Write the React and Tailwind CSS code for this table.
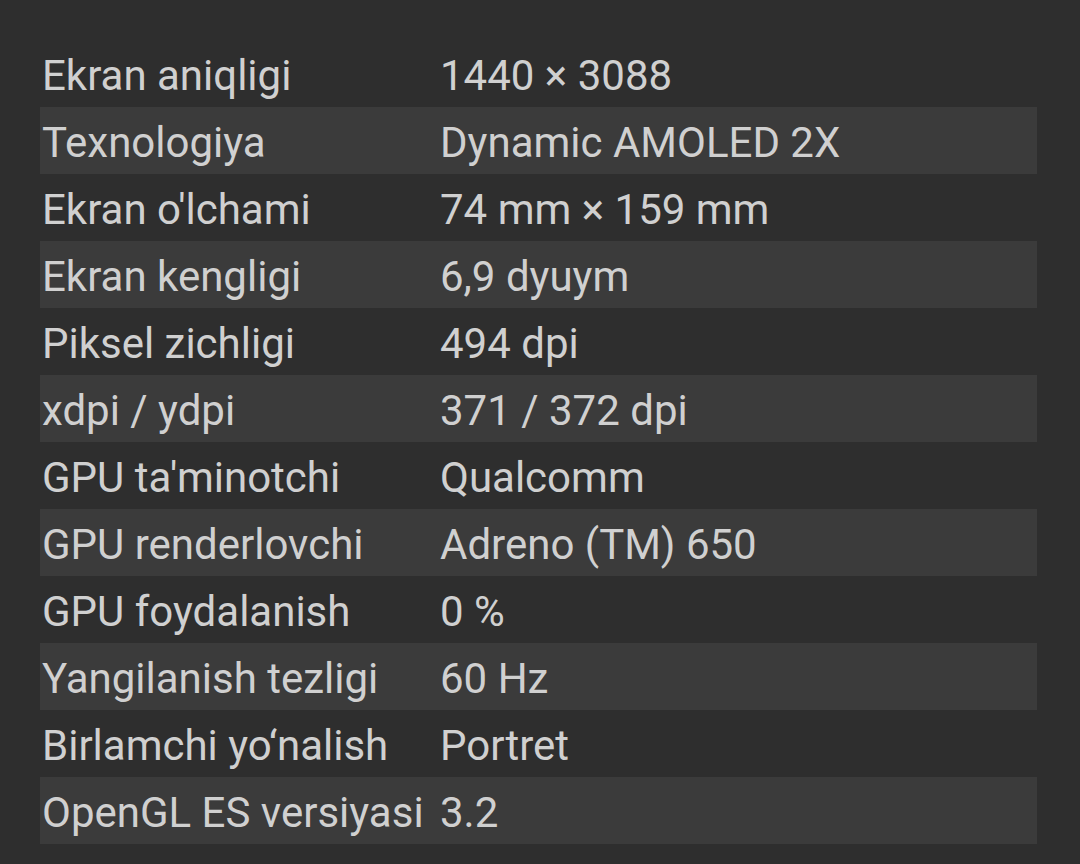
import React from "react";

const rows = [
  ["Ekran aniqligi", "1440 × 3088"],
  ["Texnologiya", "Dynamic AMOLED 2X"],
  ["Ekran o'lchami", "74 mm × 159 mm"],
  ["Ekran kengligi", "6,9 dyuym"],
  ["Piksel zichligi", "494 dpi"],
  ["xdpi / ydpi", "371 / 372 dpi"],
  ["GPU ta'minotchi", "Qualcomm"],
  ["GPU renderlovchi", "Adreno (TM) 650"],
  ["GPU foydalanish", "0 %"],
  ["Yangilanish tezligi", "60 Hz"],
  ["Birlamchi yo‘nalish", "Portret"],
  ["OpenGL ES versiyasi", "3.2"],
];

export default function App() {
  return (
    <div
      className="w-[1080px] h-[864px] overflow-hidden bg-[#2e2e2e] text-[#d0d0d0] pt-[40px] pl-[40px] pr-[43px]"
      style={{ fontFamily: "Roboto, 'Noto Sans', sans-serif" }}
    >
      {rows.map(([k, v], i) => (
        <div
          key={i}
          className={
            "flex h-[67px] pt-[4px] text-[42px] leading-[63px] " +
            (i % 2 === 1 ? "bg-[#3b3b3b]" : "")
          }
        >
          <div className="w-[400px] shrink-0 pl-[2px] whitespace-nowrap">{k}</div>
          <div className="whitespace-nowrap">{v}</div>
        </div>
      ))}
    </div>
  );
}
